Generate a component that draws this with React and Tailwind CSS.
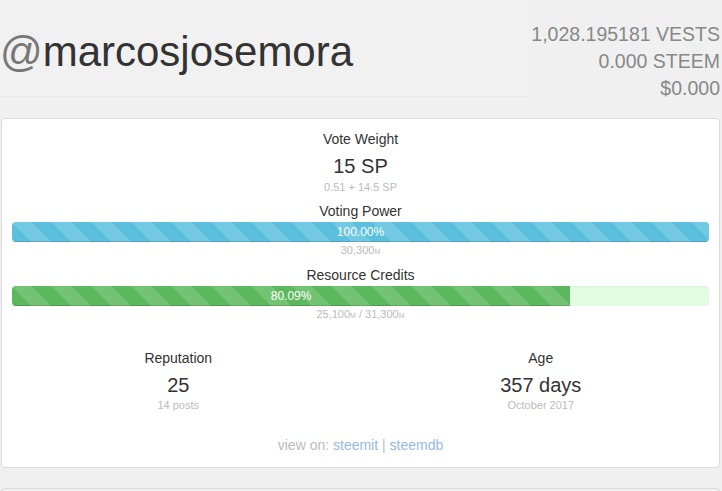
import React from "react";

const stripes =
  "bg-[linear-gradient(45deg,rgba(255,255,255,.15)_25%,transparent_25%,transparent_50%,rgba(255,255,255,.15)_50%,rgba(255,255,255,.15)_75%,transparent_75%,transparent)] [background-size:40px_40px]";

function Mega({ children }) {
  return <span className="text-[7px] leading-none">{children}</span>;
}

function Bar({ pct, label, color, track }) {
  return (
    <div className={`mt-[1px] h-[20px] w-full overflow-hidden rounded-[4px] ${track}`}>
      <div
        className={`flex h-full items-center justify-center text-[12px] leading-[20px] text-white shadow-[inset_0_-1px_0_rgba(0,0,0,.15)] ${color} ${stripes}`}
        style={{ width: pct }}
      >
        {label}
      </div>
    </div>
  );
}

export default function App() {
  return (
    <div className="min-h-[491px] bg-[#f0f0f0] font-['Liberation_Sans',Arial,sans-serif] text-[#333]">
      <div className="flex">
        <div className="h-[97px] flex-1 border-b border-[#eaeaea] bg-[#f1f1f1] pt-[31px] text-[42px] leading-[42px]">
          <span className="text-[#777]">@</span>marcosjosemora
        </div>
        <div className="pt-[21px] pr-[2px] text-right text-[19.5px] leading-[27px] text-[#888]">
          <div>1,028.195181 VESTS</div>
          <div>0.000 STEEM</div>
          <div>$0.000</div>
        </div>
      </div>

      <div className="mt-[16px] ml-[1px] mr-[2px] rounded-[4px] border border-[#dcdcdc] bg-white px-[10px] pt-[10px] pb-[12px] text-center">
        <div className="text-[14px] leading-[20px]">Vote Weight</div>
        <div className="mt-[5px] text-[20px] leading-[24px]">15 SP</div>
        <div className="mt-[2px] text-[11px] leading-[14px] text-[#bbb]">0.51 + 14.5 SP</div>

        <div className="mt-[7px] text-[14px] leading-[20px]">Voting Power</div>
        <Bar pct="100%" label="100.00%" color="bg-[#5bc0de]" track="bg-[#f5f5f5]" />
        <div className="mt-[1px] h-[14px] text-[11px] leading-[14px] text-[#bbb]">
          30,300<Mega>M</Mega>
        </div>

        <div className="mt-[8px] text-[14px] leading-[20px]">Resource Credits</div>
        <Bar pct="80.09%" label="80.09%" color="bg-[#5cb85c]" track="bg-[#e3fde3] shadow-[inset_0_1px_2px_rgba(0,0,0,.06)]" />
        <div className="mt-[1px] h-[14px] text-[11px] leading-[14px] text-[#bbb]">
          25,100<Mega>M</Mega> / 31,300<Mega>M</Mega>
        </div>

        <div className="mt-[27px] grid grid-cols-2">
          <div className="pr-[16px]">
            <div className="text-[14px] leading-[20px]">Reputation</div>
            <div className="mt-[5px] text-[20px] leading-[24px]">25</div>
            <div className="mt-[1px] text-[11px] leading-[14px] text-[#bbb]">14 posts</div>
          </div>
          <div className="pl-[12px]">
            <div className="text-[14px] leading-[20px]">Age</div>
            <div className="mt-[5px] text-[20px] leading-[24px]">357 days</div>
            <div className="mt-[1px] text-[11px] leading-[14px] text-[#bbb]">October 2017</div>
          </div>
        </div>

        <div className="mt-[23px] text-[14px] leading-[20px] text-[#bbb]">
          view on: <span className="text-[#97b9db]">steemit</span> |{" "}
          <span className="text-[#97b9db]">steemdb</span>
        </div>
      </div>

      <div className="mt-[20px] ml-[1px] mr-[2px] h-[4px] rounded-t-[4px] border-x border-t border-[#dcdcdc]" />
    </div>
  );
}
